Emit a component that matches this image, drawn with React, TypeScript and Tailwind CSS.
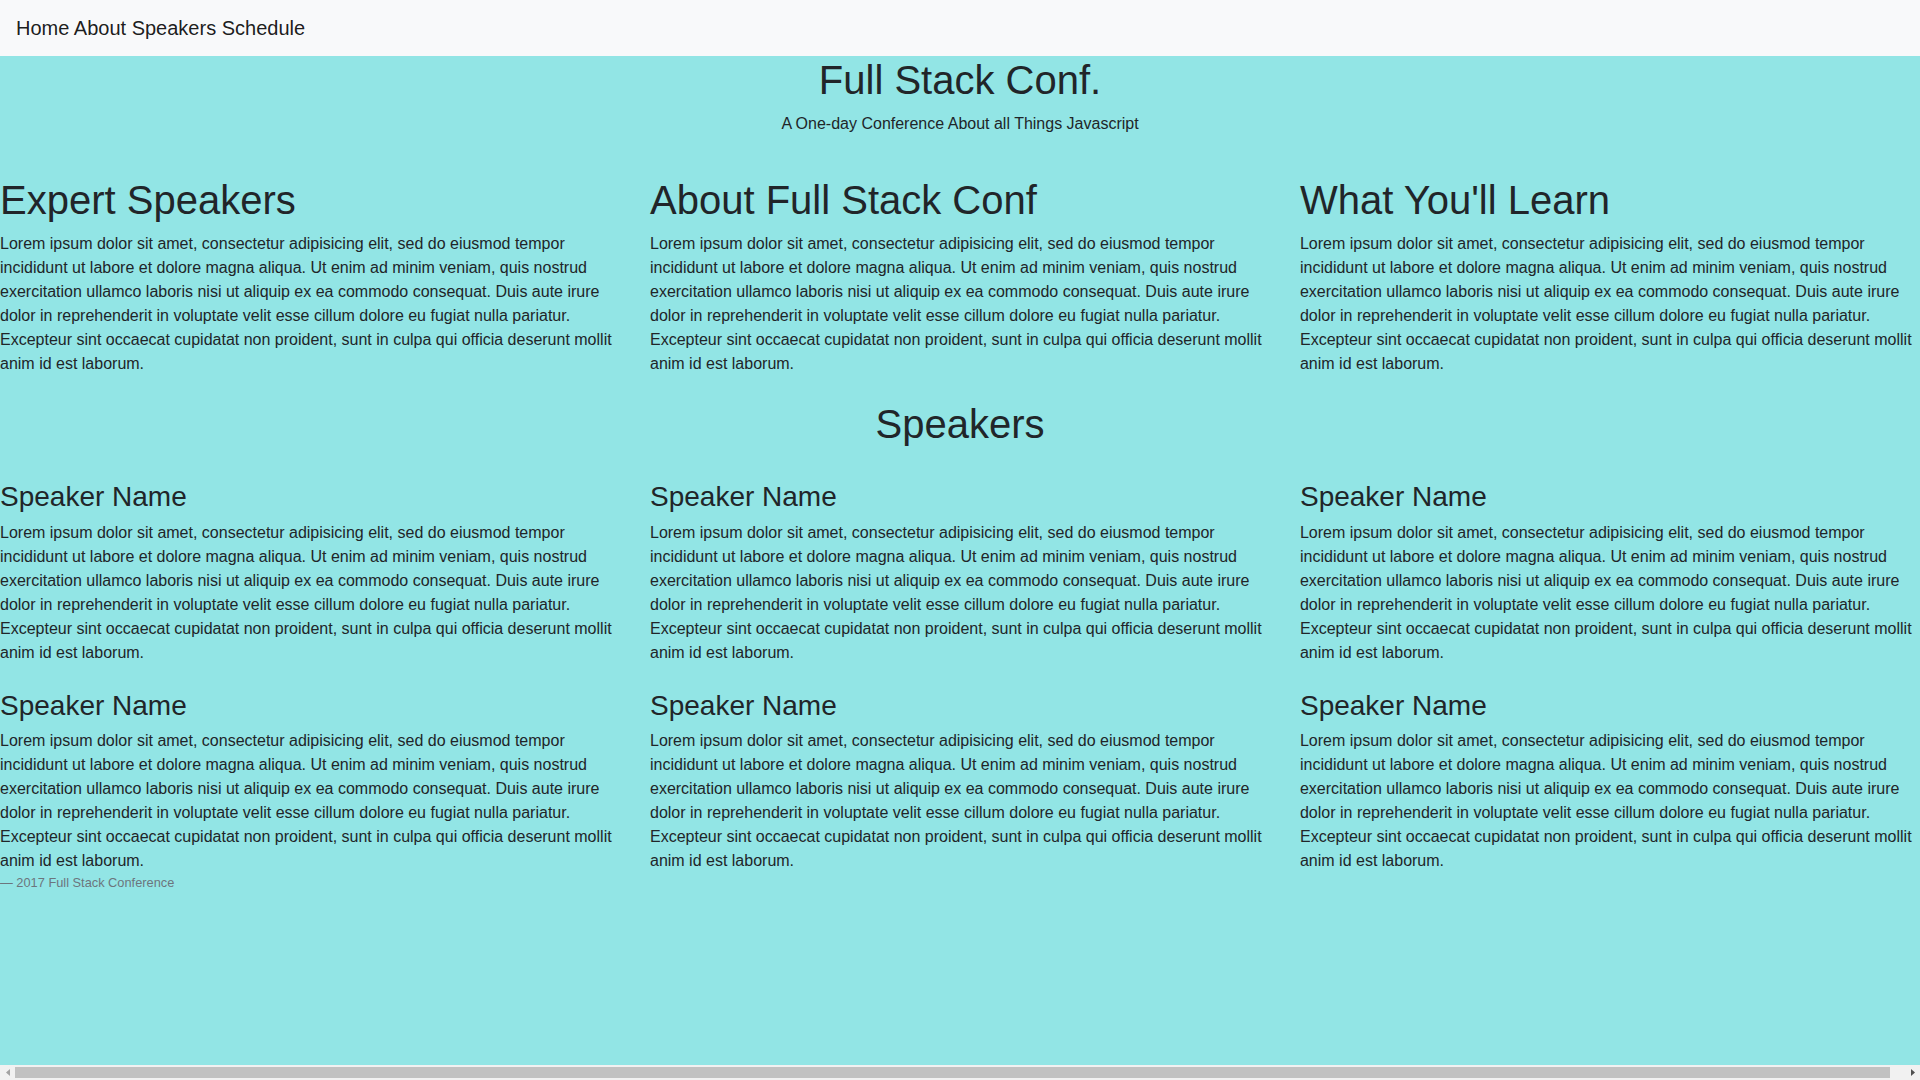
const lorem =
  "Lorem ipsum dolor sit amet, consectetur adipisicing elit, sed do eiusmod tempor incididunt ut labore et dolore magna aliqua. Ut enim ad minim veniam, quis nostrud exercitation ullamco laboris nisi ut aliquip ex ea commodo consequat. Duis aute irure dolor in reprehenderit in voluptate velit esse cillum dolore eu fugiat nulla pariatur. Excepteur sint occaecat cupidatat non proident, sunt in culpa qui officia deserunt mollit anim id est laborum.";

const intro = ["Expert Speakers", "About Full Stack Conf", "What You'll Learn"];

function SpeakerRow({ withFooter }: { withFooter?: boolean }) {
  return (
    <div className="-mx-[15px] flex">
      {[0, 1, 2].map((i) => (
        <div key={i} className="w-1/3 px-[15px]">
          <h3 className="mb-[7px] text-[28px] leading-[1.2]">Speaker Name</h3>
          <p>{lorem}</p>
          {withFooter && i === 0 && (
            <footer className="text-[12.8px] leading-[1.5] text-[#6c757d]">
              {"\u2014\u00a0"}2017 Full Stack Conference
            </footer>
          )}
        </div>
      ))}
    </div>
  );
}

// the browser's horizontal scrollbar (row overflows by 15px)
function ScrollBar() {
  return (
    <div className="flex h-[15px] shrink-0 items-center bg-[#f1f1f1]">
      <div className="flex w-[15px] justify-center">
        <svg width="4" height="7" viewBox="0 0 4 7">
          <path d="M4 0 L0 3.5 L4 7 Z" fill="#a3a3a3" />
        </svg>
      </div>
      <div className="h-[11px] flex-1 bg-[#c1c1c1]" />
      <div className="w-[15px]" />
      <div className="flex w-[15px] justify-center">
        <svg width="4" height="7" viewBox="0 0 4 7">
          <path d="M0 0 L4 3.5 L0 7 Z" fill="#505050" />
        </svg>
      </div>
    </div>
  );
}

export default function App() {
  return (
    <div className="flex min-h-screen flex-col bg-[#92e5e5] font-['Liberation_Sans',Arial,sans-serif] text-base leading-6 text-[#212529]">
      <div className="flex-1">
        <nav className="bg-[#f8f9fa] px-4 py-2">
          <div className="py-[5px] text-xl leading-[30px] text-black/90">
            <a href="#">Home</a> <a href="#">About</a> <a href="#">Speakers</a>{" "}
            <a href="#">Schedule</a>
          </div>
        </nav>

        <header className="text-center">
          <h1 className="mb-2 text-[40px] leading-[1.2]">Full Stack Conf.</h1>
          <p>A One-day Conference About all Things Javascript</p>
        </header>

        <section className="-mx-[15px] mt-10 flex">
          {intro.map((t) => (
            <div key={t} className="w-1/3 px-[15px]">
              <h1 className="mb-2 text-[40px] leading-[1.2]">{t}</h1>
              <p>{lorem}</p>
            </div>
          ))}
        </section>

        <h1 className="mt-6 text-center text-[40px] leading-[1.2]">Speakers</h1>

        <div className="mt-8">
          <SpeakerRow />
        </div>
        <div className="mt-6">
          <SpeakerRow withFooter />
        </div>
      </div>
      <ScrollBar />
    </div>
  );
}
